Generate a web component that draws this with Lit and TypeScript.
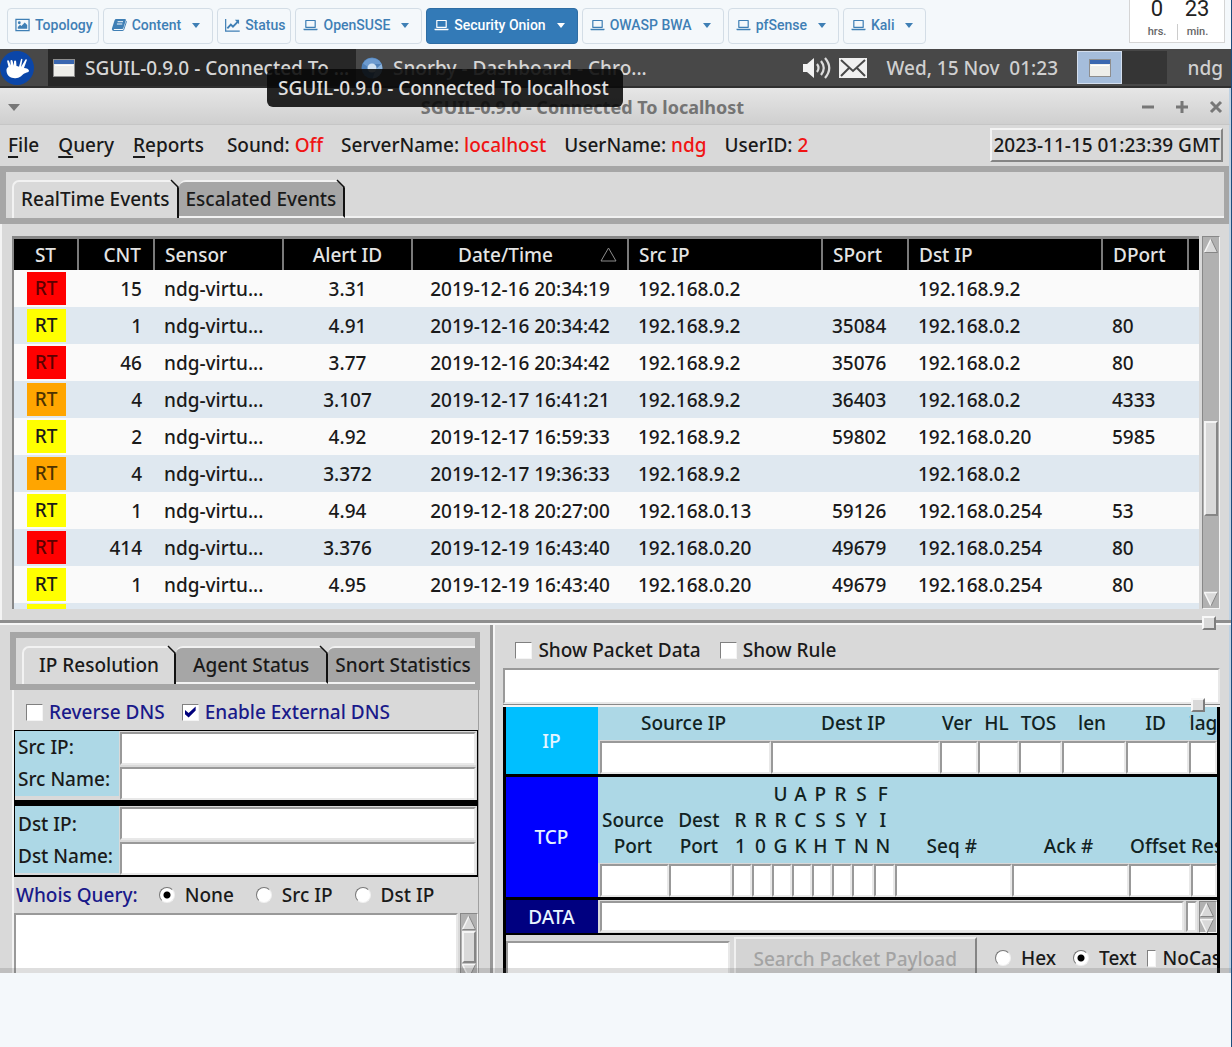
import { LitElement, html, svg, css, nothing } from "lit";
import { customElement } from "lit/decorators.js";
import { classMap } from "lit/directives/class-map.js";

interface NavItem { label: string; icon: string; menu: boolean; active?: boolean; }
interface EventRow { level: string; cnt: string; id: string; time: string; src: string; sport: string; dst: string; dport: string; }

const NAV: NavItem[] = [
  { label: "Topology", icon: "picture", menu: false },
  { label: "Content", icon: "book", menu: true },
  { label: "Status", icon: "chart", menu: false },
  { label: "OpenSUSE", icon: "laptop", menu: true },
  { label: "Security Onion", icon: "laptop", menu: true, active: true },
  { label: "OWASP BWA", icon: "laptop", menu: true },
  { label: "pfSense", icon: "laptop", menu: true },
  { label: "Kali", icon: "laptop", menu: true },
];

const row = (level: string, cnt: string, id: string, time: string, src: string, sport: string, dst: string, dport: string): EventRow =>
  ({ level, cnt, id, time, src, sport, dst, dport });

const EVENTS: EventRow[] = [
  row("red", "15", "3.31", "2019-12-16 20:34:19", "192.168.0.2", "", "192.168.9.2", ""),
  row("yellow", "1", "4.91", "2019-12-16 20:34:42", "192.168.9.2", "35084", "192.168.0.2", "80"),
  row("red", "46", "3.77", "2019-12-16 20:34:42", "192.168.9.2", "35076", "192.168.0.2", "80"),
  row("orange", "4", "3.107", "2019-12-17 16:41:21", "192.168.9.2", "36403", "192.168.0.2", "4333"),
  row("yellow", "2", "4.92", "2019-12-17 16:59:33", "192.168.9.2", "59802", "192.168.0.20", "5985"),
  row("orange", "4", "3.372", "2019-12-17 19:36:33", "192.168.9.2", "", "192.168.0.2", ""),
  row("yellow", "1", "4.94", "2019-12-18 20:27:00", "192.168.0.13", "59126", "192.168.0.254", "53"),
  row("red", "414", "3.376", "2019-12-19 16:43:40", "192.168.0.20", "49679", "192.168.0.254", "80"),
  row("yellow", "1", "4.95", "2019-12-19 16:43:40", "192.168.0.20", "49679", "192.168.0.254", "80"),
];

const IP_FIELDS = ["Source IP", "Dest IP", "Ver", "HL", "TOS", "len", "ID", "Flags"];
const TCP_FIELDS: string[][] = [
  ["Source", "Port"], ["Dest", "Port"], ["R", "1"], ["R", "0"], ["U", "R", "G"], ["A", "C", "K"],
  ["P", "S", "H"], ["R", "S", "T"], ["S", "Y", "N"], ["F", "I", "N"], ["Seq #"], ["Ack #"], ["Offset"], ["Res"],
];

const icons: Record<string, unknown> = {
  picture: svg`<path d="M1 2h14v12H1z" fill="none" stroke="currentColor" stroke-width="1.3"/><circle cx="4.6" cy="5.6" r="1.5" fill="currentColor"/><path d="M3 12V10l2.4-2.4 1.4 1.4L10.4 5.4 13 8v4z" fill="currentColor"/>`,
  book: svg`<path d="M5.2 2h8.600c.9 0 1.300.6 1 1.400L12.400 11c-.2.7-.8 1-1.500 1H3.200c-.6 0-.7.9.1.9h8.200c.6 0 .9-.3 1.100-.9l2.600-8.200c.6.3.7.8.5 1.400l-2.400 7.400c-.3.9-1 1.400-1.900 1.400H3c-1.500 0-2.500-1.300-2-2.700L3.500 3.500c.3-.9.8-1.500 1.700-1.500z" fill="currentColor"/><path d="M6.600 4.700h5.400M5.900 7h5.400" stroke="#f4f8fb" stroke-width="1"/>`,
  chart: svg`<path d="M.7 1.5v13h15" fill="none" stroke="currentColor" stroke-width="1.3"/><path d="M2.500 11.500 6.200 7.500l2.300 2.300L13.500 4.600" fill="none" stroke="currentColor" stroke-width="2"/><path d="M10.500 2.500H15v4.600z" fill="currentColor"/>`,
  laptop: svg`<path d="M3 3.200h10v7.300H3z" fill="none" stroke="currentColor" stroke-width="1.3" stroke-linejoin="round"/><path d="M.5 12h15v.7c0 .6-.7.9-1.500.9H2c-.8 0-1.500-.3-1.500-.9z" fill="currentColor"/>`,
};

const windowIcon = html`<svg class="win" viewBox="0 0 22 18" aria-hidden="true"><rect x=".5" y=".5" width="21" height="17" fill="#eeeeea" stroke="#8e8e8e"/><rect x="1" y="1" width="20" height="4" fill="#3a67b0"/><path d="M2 6.500h18" stroke="#fff"/></svg>`;

@customElement("app-root")
export class AppRoot extends LitElement {
  static styles = css`
    :host {
      display: block;
      min-height: 100vh;
      box-sizing: border-box;
      background: #f4f8fb;
      border-right: 1px solid #1c4d7c;
      font-family: "Noto Sans", "Open Sans", sans-serif;
      font-size: 19px;
      font-weight: 500;
      line-height: 26px;
      color: #1a1a1a;
    }
    *, *::before, *::after { box-sizing: border-box; }
    button, input, textarea { font: inherit; color: inherit; margin: 0; border-radius: 0; }
    button { padding: 0; border: 0; background: none; }
    input, textarea { display: block; min-width: 0; outline: 0; }

    .nav { display: flex; height: 49px; padding: 8px 6px 0 7px; gap: 4px; align-items: flex-start; overflow: hidden; font: 500 14px/20px Roboto, sans-serif; }
    .nav-btn { display: flex; align-items: center; gap: 5px; height: 36px; padding: 0 5px 2px 7px; border: 1px solid #d3dde6; border-radius: 4px; color: #3f7fb5; white-space: nowrap; }
    .nav-btn.menu { padding-right: 12px; }
    .nav-btn.active { background: #337ab7; border-color: #2e6da4; color: #fff; }
    .nav-icon { width: 15px; height: 16px; }
    .nav-icon.book { width: 16px; }
    .caret { margin-left: 6px; border: 4px solid transparent; border-top: 5px solid currentColor; border-bottom: 0; }
    .timer { display: flex; align-self: flex-end; margin-left: auto; margin-bottom: 6px; padding: 0 7px; border: 1px solid #d5d5d5; background: #fff; }
    .unit { display: flex; flex-direction: column; align-items: center; width: 40px; font-size: 22px; line-height: 30px; color: #222; font-weight: 400; }
    .unit small { width: 100%; margin-bottom: 2px; border-left: 1px solid #ccc; font-size: 11px; line-height: 16px; font-weight: 500; color: #666; text-align: center; }
    .unit:first-child small { border-left: 0; }

    .vm { position: relative; overflow: hidden; background: #d9d9d9; }
    .taskbar { display: flex; height: 39px; align-items: stretch; background: #484848; border-bottom: 2px solid #303030; color: #d0d0d0; white-space: nowrap; }
    .start { width: 48px; }
    .start svg { display: block; width: 36px; height: 36px; }
    .task { display: flex; align-items: center; gap: 10px; width: 308px; padding-left: 5px; color: #d6d6d6; }
    .task.current { background: #272727; }
    .win { width: 22px; height: 18px; }
    .globe { width: 22px; height: 22px; }
    .tray { display: flex; align-items: center; margin-left: auto; }
    .sound { width: 30px; height: 26px; margin-right: 7px; }
    .mail { width: 28px; height: 20px; margin-right: 20px; }
    .date { margin-right: 19px; white-space: pre; }
    .desk { display: flex; align-items: center; justify-content: center; width: 45px; height: 33px; background: #353535; }
    .desk.on { background: #a5bddb; border: 1px solid #d3deed; }
    .user { width: 64px; padding-right: 8px; text-align: right; }

    .titlebar { display: flex; align-items: center; height: 37px; padding: 2px 6px 0 8px; background: linear-gradient(#e6e6e6, #cfcfcf); border-bottom: 1px solid #c6c6c6; color: #747474; font-size: 18px; font-weight: 700; }
    .titlebar h1 { flex: 1; margin: 0; padding-left: 4px; font: inherit; text-align: center; }
    .down { border: 6px solid transparent; border-top: 7px solid #777; border-bottom: 0; }
    .winbtns { display: flex; gap: 20px; }
    .winbtns svg { display: block; width: 14px; height: 14px; }
    .tip { position: absolute; z-index: 2; left: 267px; top: 20px; height: 38px; padding: 6px 14px 6px 11px; border-radius: 6px; background: rgba(8, 8, 8, .88); color: #e0e0e0; white-space: nowrap; }

    .menubar { display: flex; align-items: center; gap: 18px; height: 41px; padding: 0 6px 1px 8px; white-space: nowrap; }
    .menus { display: flex; gap: 19px; margin-right: 5px; }
    .menus u { text-underline-offset: 4px; text-decoration-thickness: 2px; }
    .menubar b { font-weight: inherit; color: #f01414; }
    .clock { margin-left: auto; padding: 2px 1px 2px 2px; border: 2px solid; border-color: #f4f4f4 #858585 #858585 #f4f4f4; }

    .tabs { display: flex; height: 58px; padding: 8px 0 0 6px; border: 6px solid #a6a6a6; border-width: 6px 5px 6px 6px; overflow: hidden; }
    .tab { position: relative; flex: none; height: 38px; padding: 0 7px 2px; border: 2px solid; border-width: 2px 2px 0 2px; border-color: #f2f2f2 #111 transparent #f2f2f2; border-top-left-radius: 7px; white-space: nowrap; }
    .tab.back { background: #a6a6a6; border-left: 0; padding: 0 7px; border-bottom: 2px solid #f2f2f2; }
    .tab.wide { padding-left: 15px; padding-right: 15px; }
    .tab.back.wide { padding-left: 17px; padding-right: 17px; }
    .tab svg { position: absolute; top: -3px; right: -2px; width: 9px; height: 9px; }
    .fill { flex: 1; height: 38px; border-bottom: 2px solid #f2f2f2; }

    .edge { border-right: 2px solid #bdd1e3; }
    .events { display: flex; gap: 3px; padding: 12px 9px 11px 10px; border-left: 2px solid #f4f4f4; }
    .grid { flex: 1; min-width: 0; border: 1px solid #888; border-width: 3px 0 0 2px; overflow: hidden; }
    table { width: 100%; border-collapse: collapse; table-layout: fixed; background: #fafafa; }
    th { height: 31px; padding: 0 10px; background: #000; color: #e4e4e4; font-weight: inherit; text-align: left; border-right: 2px solid #7a7a7a; overflow: hidden; white-space: nowrap; }
    th:last-child { border-right: 0; }
    td { height: 37px; padding: 0 10px; white-space: nowrap; overflow: hidden; }
    tbody tr:nth-child(even) { background: #dfe8f0; }
    .c { text-align: center; }
    .r { text-align: right; padding-right: 12px; }
    .c-st { width: 64px; } .c-cnt { width: 76px; } .c-sensor { width: 129px; } .c-id { width: 129px; } .c-time { width: 216px; }
    .c-ip { width: 194px; } .c-port { width: 86px; }
    .st { padding: 0; }
    .sort { display: flex; justify-content: flex-end; align-items: center; gap: 47px; }
    .sort svg { width: 17px; height: 15px; }
    .rt { display: block; width: 39px; height: 33px; margin: 0 auto; line-height: 33px; text-align: center; }
    .red { background: #f00; color: #5c0000; } .yellow { background: #ff0; } .orange { background: #ffa500; color: #4d3200; }
    .peek td { height: 6px; line-height: 0; }
    .peek .rt { height: 5px; margin-top: 1px; }
    .scroll { display: flex; flex-direction: column; width: 18px; padding: 1px; background: #b1b1b1; border: 1px solid; border-color: #888 #f4f4f4 #f4f4f4 #888; }
    .scroll svg { display: block; flex: none; width: 14px; height: 16px; }
    .thumb { width: 14px; background: #d9d9d9; border: 2px solid; border-color: #f4f4f4 #868686 #868686 #f4f4f4; }
    .track { flex: 1; }

    .sash { position: relative; height: 5px; background: #f6f6f6; border-top: 3px solid #8e8e8e; }
    .handle { position: absolute; z-index: 1; width: 14px; height: 14px; background: #d9d9d9; border: 2px solid; border-color: #f8f8f8 #7d7d7d #7d7d7d #f8f8f8; }
    .sash .handle { right: 15px; top: -7px; }
    .panes { display: grid; grid-template-columns: minmax(0, 2fr) 5px minmax(0, 3fr); height: 348px; overflow: hidden; }
    .vsash { position: relative; background: #f6f6f6; border-left: 3px solid #989898; }
    .vsash .handle { left: -7px; bottom: -5px; }

    .left { padding: 7px 10px 0 10px; min-width: 0; }
    .lbody { margin: 0 1px 0 2px; border-left: 2px solid #f4f4f4; border-right: 1px solid #a0a0a0; }
    .checks { display: flex; align-items: center; height: 40px; padding: 4px 0 0 12px; color: #1a1a8a; white-space: nowrap; }
    .checks label { margin: 0 17px 0 6px; }
    .checks.dark { height: 43px; padding: 7px 0 0 12px; color: #1a1a1a; }
    .checks.dark label { margin-right: 19px; }
    .box { appearance: none; flex: none; width: 17px; height: 17px; background: #fff; border: 1px solid; border-color: #808080 #f4f4f4 #f4f4f4 #808080; }
    .box:checked::before { content: ""; display: block; width: 11px; height: 12px; margin: 1px 2px; background: #00007c; clip-path: polygon(0 35%, 36% 62%, 100% 8%, 100% 42%, 36% 100%, 0 70%); }
    .radio { appearance: none; flex: none; width: 16px; height: 16px; border-radius: 50%; background: #fff; border: 1px solid; border-color: #777 #f0f0f0 #f0f0f0 #777; }
    .radio:checked { background: radial-gradient(circle, #000 0 3px, #fff 4px); }
    .host { display: grid; grid-template-columns: 104px minmax(0, 1fr); height: 72px; border: 1px solid #000; border-bottom-width: 2px; background: #d9d9d9; }
    .host + .host { height: 75px; border-top-width: 4px; }
    .keys { display: flex; flex-direction: column; gap: 6px; padding: 3px 0 4px 3px; background: #add8e6; align-self: start; white-space: nowrap; }
    .host + .host .keys { padding-top: 5px; }
    .vals { display: flex; flex-direction: column; gap: 2px; padding: 1px; }
    .entry { width: 100%; height: 33px; background: #fff; border: 2px solid; border-color: #999 #e8e8e8 #e8e8e8 #999; resize: none; }
    .whois { display: flex; align-items: center; height: 36px; padding: 0 0 0 2px; white-space: nowrap; }
    .whois span { margin-right: 21px; color: #1a1a8a; }
    .whois label { margin: 0 22px 0 10px; }
    .out { display: flex; gap: 2px; height: 70px; }
    .out textarea { flex: 1; height: 70px; }

    .right { min-width: 0; padding: 0 9px 0 8px; border-right: 2px solid #bdd1e3; }
    .rule { height: 36px; }
    .split { position: relative; height: 3px; border-top: 1px solid #888; background: #f4f4f4; }
    .split .handle { right: 15px; top: -7px; }
    .packet { border: 3px solid #000; border-width: 0 3px; overflow: hidden; }
    .layer { display: grid; grid-template-columns: 92px minmax(0, 1fr); border-bottom: 3px solid #000; }
    .layer.last { border-bottom-width: 2px; }
    .tag { display: flex; align-items: center; justify-content: center; padding-right: 2px; color: #e6f4ff; }
    .tag.ip { background: #00bfff; } .tag.tcp { background: #00f; } .tag.data { background: #000080; }
    .fields { display: grid; padding-left: 2px; background: linear-gradient(#add8e6 calc(100% - 34px), #d9d9d9 0); }
    .fields.ip { grid-template-columns: minmax(0, 171fr) minmax(0, 170fr) 38px 41px 43px 64px 63px 28px; }
    .fields.tcp { grid-template-columns: 69px 63px 20px 20px 20px 20px 20px 20px 22px 21px minmax(0, 1fr) minmax(0, 1fr) 62px 26px; }
    .field { display: flex; flex-direction: column; justify-content: flex-end; align-items: center; gap: 5px; min-width: 0; overflow: hidden; white-space: nowrap; text-align: center; color: #122; }
    .field label { margin-right: 4px; }
    .fields.ip .field { padding-top: 3px; }
    .fields.tcp .field { padding-top: 4px; }
    .field:last-child label { margin-right: 0; }
    .fields.tcp .field:last-child { align-items: flex-start; }
    .payload { display: flex; gap: 2px; padding: 1px 0 0 2px; background: #d9d9d9; }
    .payload .entry { height: 31px; }
    .payload .side { flex: none; width: 11px; }
    .payload .scroll { flex: none; padding: 0; height: 32px; }
    .search { display: flex; align-items: center; height: 46px; background: #d9d9d9; white-space: nowrap; }
    .search .entry { flex: 1; height: 40px; margin-top: 6px; }
    .search button { height: 44px; margin: 2px 18px 0 4px; padding: 0 18px; border: 2px solid; border-color: #f0f0f0 #858585 #858585 #f0f0f0; background: #d4d4d4; color: #a3a3a3; }
    .opts { display: flex; align-items: center; width: 222px; overflow: hidden; }
    .opts label { margin: 0 17px 0 10px; }
    .opts .txt { margin-right: 10px; }
    .opts .nocase { margin: 0 0 0 7px; }
    .opts .box { width: 9px; }
    .shade { position: absolute; left: 0; right: 0; bottom: 0; height: 5px; background: rgba(90, 90, 90, .2); }
  `;

  private arrow(up: boolean) {
    return html`<svg viewBox="0 0 14 16" aria-hidden="true">
      ${up
        ? svg`<path d="M7 1 13.500 14.500H.5z" fill="#d9d9d9"/><path d="M7 1 .5 14.500" stroke="#f6f6f6" stroke-width="1.500"/><path d="M7 1 13.500 14.500H.5" fill="none" stroke="#858585"/>`
        : svg`<path d="M7 15 13.500 1.500H.5z" fill="#d9d9d9"/><path d="M7 15 .5 1.500H13.500" fill="none" stroke="#f6f6f6" stroke-width="1.500"/><path d="M7 15 13.500 1.500" stroke="#858585"/>`}
    </svg>`;
  }

  private tab(label: string, back: boolean, wide = false, notch = true) {
    return html`<button class=${classMap({ tab: true, back, wide })} type="button">${label}${notch
      ? html`<svg viewBox="0 0 9 9" aria-hidden="true"><path d="M1 0h8v9z" fill="#d9d9d9"/><path d="M1 1 8.500 8.500" stroke="#111" stroke-width="1.500"/></svg>`
      : nothing}</button>`;
  }

  private host(prefix: string) {
    const id = prefix.toLowerCase();
    return html`<div class="host">
      <div class="keys"><label for="${id}-ip">${prefix} IP:</label><label for="${id}-name">${prefix} Name:</label></div>
      <div class="vals"><input class="entry" id="${id}-ip" type="text"><input class="entry" id="${id}-name" type="text"></div>
    </div>`;
  }

  render() {
    return html`
      <nav class="nav">
        ${NAV.map(n => html`<button type="button" class=${classMap({ "nav-btn": true, menu: n.menu, active: !!n.active })}>
          <svg class="nav-icon ${n.icon}" viewBox="0 0 16 16" aria-hidden="true">${icons[n.icon]}</svg><span>${n.label}</span>${n.menu ? html`<i class="caret"></i>` : nothing}
        </button>`)}
        <div class="timer"><div class="unit">0<small>hrs.</small></div><div class="unit">23<small>min.</small></div></div>
      </nav>
      <main class="vm">
        <div class="taskbar">
          <button class="start" type="button" aria-label="Applications"><svg viewBox="0 0 36 36"><circle cx="17" cy="18" r="17" fill="#0b46a8"/><path d="M6.500 21c-.2-2 .5-3.500 2-4l-1.300-5.500c-.2-1.200 1.400-1.600 1.800-.5l1.700 4.500L10.500 11c0-1.300 1.700-1.400 2-.2l1.300 5 .3-4.500c.1-1.200 1.900-1.200 2 0l.4 4.700c1 .1 1.800.4 2.500.8l2-7.500c.4-.9 1.500-.6 1.400.3L21 17l4.500-7.500c.6-.8 1.600-.2 1.300.7L24 18c2.500.2 5 1 5 2.800-.3 2.200-3.500 1.700-5.500 3.200-2.500 2-3.500 4-8 4.200S7 26 6.500 21z" fill="#fff"/></svg></button>
          <button class="task current" type="button">${windowIcon}<span>SGUIL-0.9.0 - Connected To ...</span></button>
          <button class="task" type="button"><svg class="globe" viewBox="0 0 22 22" aria-hidden="true"><circle cx="11" cy="11" r="10.500" fill="#4f80b8"/><path d="M2 6.500A10.500 10.500 0 0 1 20.500 7H11a4 4 0 0 0-4 3z" fill="#6c9bd0"/><path d="M20.500 7a10.500 10.500 0 0 1-9 14.500L15 12z" fill="#8db4dc"/><circle cx="11" cy="11" r="4.500" fill="#cfe1f2"/></svg><span>Snorby - Dashboard - Chro...</span></button>
          <div class="tray">
            <svg class="sound" viewBox="0 0 30 26" role="img" aria-label="Volume"><path d="M1 9h4l7-6v20l-7-6H1z" fill="#f2f2f2"/><path d="M15 9q3 4 0 8M19 6q5.500 7 0 14M23 3q8.500 10 0 20" fill="none" stroke="#dcdcdc" stroke-width="2.200"/></svg>
            <svg class="mail" viewBox="0 0 28 20" role="img" aria-label="Mail"><path d="M0 0h28v20H0z" fill="#f0f0f0"/><path d="M2 2l12 11L26 2M2 18l8-8M26 18l-8-8" fill="none" stroke="#484848" stroke-width="2"/></svg>
            <span class="date">Wed, 15 Nov  01:23</span>
            <span class="desk on">${windowIcon}</span><span class="desk"></span>
            <span class="user">ndg</span>
          </div>
        </div>
        <header class="titlebar edge"><i class="down"></i><h1>SGUIL-0.9.0 - Connected To localhost</h1>
          <div class="winbtns">
            <button type="button" aria-label="Minimize"><svg viewBox="0 0 14 14"><path d="M1 7h12" stroke="#777" stroke-width="3"/></svg></button>
            <button type="button" aria-label="Maximize"><svg viewBox="0 0 14 14"><path d="M1 7h12M7 1v12" stroke="#777" stroke-width="3"/></svg></button>
            <button type="button" aria-label="Close"><svg viewBox="0 0 14 14"><path d="M2 2l10 10M12 2 2 12" stroke="#777" stroke-width="3"/></svg></button>
          </div>
        </header>
        <div class="tip" role="tooltip">SGUIL-0.9.0 - Connected To localhost</div>
        <div class="menubar edge">
          <div class="menus"><button type="button"><u>F</u>ile</button><button type="button"><u>Q</u>uery</button><button type="button"><u>R</u>eports</button></div>
          <span>Sound: <b>Off</b></span><span>ServerName: <b>localhost</b></span><span>UserName: <b>ndg</b></span><span>UserID: <b>2</b></span>
          <span class="clock">2023-11-15 01:23:39 GMT</span>
        </div>
        <div class="edge"><div class="tabs">${this.tab("RealTime Events", false)}${this.tab("Escalated Events", true)}<div class="fill"></div></div></div>
        <section class="events edge">
          <div class="grid">
            <table>
              <thead><tr>
                <th class="c-st c">ST</th><th class="c-cnt r">CNT</th><th class="c-sensor">Sensor</th><th class="c-id c">Alert ID</th>
                <th class="c-time"><div class="sort">Date/Time<svg viewBox="0 0 17 15" aria-hidden="true"><path d="M8.500 1 16 14H1z" fill="none" stroke="#8c8c8c"/></svg></div></th>
                <th class="c-ip">Src IP</th><th class="c-port">SPort</th><th class="c-ip">Dst IP</th><th class="c-port">DPort</th><th></th>
              </tr></thead>
              <tbody>
                ${EVENTS.map(e => html`<tr>
                  <td class="st"><span class="rt ${e.level}">RT</span></td><td class="r">${e.cnt}</td><td>ndg-virtu...</td><td class="c">${e.id}</td>
                  <td class="c">${e.time}</td><td>${e.src}</td><td>${e.sport}</td><td>${e.dst}</td><td>${e.dport}</td><td></td></tr>`)}
                <tr class="peek"><td class="st"><span class="rt yellow"></span></td><td colspan="9"></td></tr>
              </tbody>
            </table>
          </div>
          <div class="scroll">${this.arrow(true)}<div class="track" style="flex-grow:172"></div><div class="thumb" style="flex-grow:94"></div><div class="track" style="flex-grow:78"></div>${this.arrow(false)}</div>
        </section>
        <div class="sash"><i class="handle"></i></div>
        <div class="panes">
          <section class="left">
            <div class="tabs">${this.tab("IP Resolution", false, true)}${this.tab("Agent Status", true, true)}${this.tab("Snort Statistics", true, false, false)}</div>
            <div class="lbody">
              <div class="checks"><input class="box" type="checkbox" id="rev"><label for="rev">Reverse DNS</label><input class="box" type="checkbox" id="ext" checked><label for="ext">Enable External DNS</label></div>
              ${this.host("Src")}${this.host("Dst")}
              <div class="whois" role="radiogroup" aria-label="Whois Query"><span>Whois Query:</span>
                <input class="radio" type="radio" name="whois" id="w0" checked><label for="w0">None</label>
                <input class="radio" type="radio" name="whois" id="w1"><label for="w1">Src IP</label>
                <input class="radio" type="radio" name="whois" id="w2"><label for="w2">Dst IP</label></div>
              <div class="out"><textarea class="entry" aria-label="Whois output"></textarea>
                <div class="scroll">${this.arrow(true)}<div class="thumb" style="height:32px"></div>${this.arrow(false)}</div></div>
            </div>
          </section>
          <div class="vsash"><i class="handle"></i></div>
          <section class="right">
            <div class="checks dark"><input class="box" type="checkbox" id="spd"><label for="spd">Show Packet Data</label><input class="box" type="checkbox" id="sr"><label for="sr">Show Rule</label></div>
            <textarea class="entry rule" aria-label="Rule"></textarea>
            <div class="split"><i class="handle"></i></div>
            <div class="packet">
              <div class="layer"><div class="tag ip">IP</div><div class="fields ip">
                ${IP_FIELDS.map((f, i) => html`<div class="field"><label for="ip${i}">${f}</label><input class="entry" id="ip${i}" type="text"></div>`)}</div></div>
              <div class="layer"><div class="tag tcp">TCP</div><div class="fields tcp">
                ${TCP_FIELDS.map((f, i) => html`<div class="field"><label for="tcp${i}">${f.map((t, k) => html`${k ? html`<br>` : nothing}${t}`)}</label><input class="entry" id="tcp${i}" type="text"></div>`)}</div></div>
              <div class="layer last"><div class="tag data">DATA</div><div class="payload"><textarea class="entry" aria-label="Payload"></textarea><textarea class="entry side" aria-label="Payload text"></textarea><div class="scroll">${this.arrow(true)}${this.arrow(false)}</div></div></div>
              <div class="search"><input class="entry" type="text" aria-label="Search text"><button type="button" disabled>Search Packet Payload</button>
                <div class="opts"><input class="radio" type="radio" name="mode" id="hex"><label for="hex">Hex</label><input class="radio" type="radio" name="mode" id="text" checked><label class="txt" for="text">Text</label><input class="box" type="checkbox" id="nc"><label class="nocase" for="nc">NoCase</label></div></div>
            </div>
          </section>
        </div>
        <div class="shade"></div>
      </main>`;
  }
}
